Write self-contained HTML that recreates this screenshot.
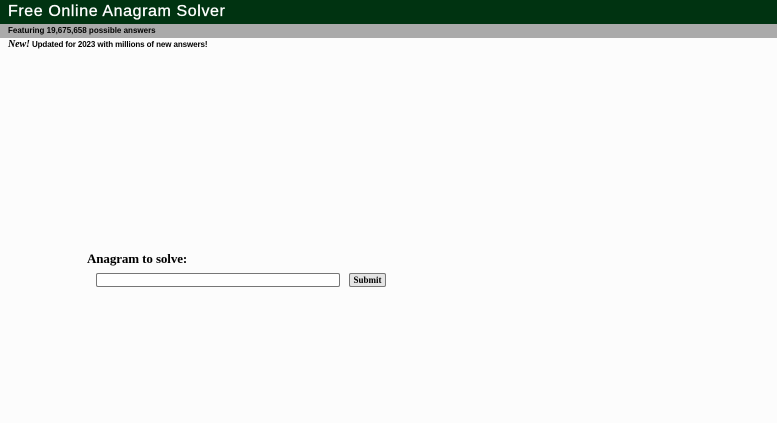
<!DOCTYPE html>
<html><head><style>
body{margin:0;background:#fcfcfc;font-family:"Liberation Sans",sans-serif;width:777px;height:423px;overflow:hidden;position:relative}
.hd{position:absolute;left:0;top:0;width:777px;height:24px;background:#003311;color:#fff;font-size:16px;line-height:23px;padding-left:8px;box-sizing:border-box;letter-spacing:0.6px;-webkit-text-stroke:0.3px #fff}
.sub{position:absolute;left:0;top:24px;width:777px;height:14px;background:#aaaaaa;font-size:8px;font-weight:bold;line-height:14px;padding-left:8px;box-sizing:border-box}
.new{position:absolute;left:8px;top:39px;font-size:8px;font-weight:bold;line-height:12px;letter-spacing:-0.1px}
.new i{font-family:"Liberation Serif",serif;font-size:10px}
.lab{position:absolute;left:87px;top:251px;font-family:"Liberation Serif",serif;font-weight:bold;font-size:13px;letter-spacing:-0.1px}
.inp{position:absolute;left:96px;top:273px;width:242px;height:12px;border:1px solid #777;border-radius:2px;background:#fff}
.btn{position:absolute;left:349px;top:273px;width:35px;height:12px;border:1px solid #777;border-radius:2px;background:#e4e4e4;font-family:"Liberation Serif",serif;font-weight:bold;font-size:9px;line-height:12px;text-align:center}
</style></head><body>
<div class="hd">Free Online Anagram Solver</div>
<div class="sub">Featuring 19,675,658 possible answers</div>
<div class="new"><i>New!</i> Updated for 2023 with millions of new answers!</div>
<div class="lab">Anagram to solve:</div>
<div class="inp"></div>
<div class="btn">Submit</div>
</body></html>
